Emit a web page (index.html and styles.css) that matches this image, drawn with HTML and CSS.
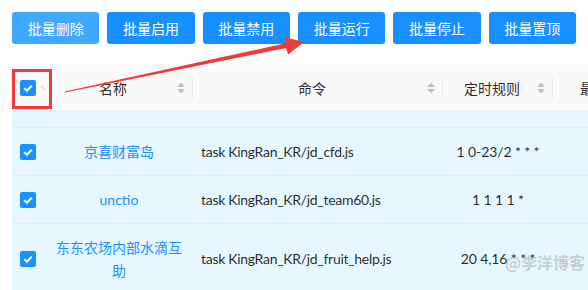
FILE: index.html
```html
<!DOCTYPE html>
<html lang="zh-CN">
<head>
<meta charset="utf-8">
<title>批量操作</title>
<link rel="stylesheet" href="styles.css">
</head>
<body>
<div class="page">
  <div class="toolbar">
    <button class="btn btn-hover">批量删除</button>
    <button class="btn">批量启用</button>
    <button class="btn">批量禁用</button>
    <button class="btn">批量运行</button>
    <button class="btn">批量停止</button>
    <button class="btn">批量置顶</button>
  </div>
  <div class="table-wrap">
    <table class="tbl">
      <colgroup>
        <col class="c-sel"><col class="c-name"><col class="c-cmd"><col class="c-cron"><col class="c-last">
      </colgroup>
      <thead>
        <tr>
          <th class="sel">
            <div class="selhead">
              <span class="cb"><svg viewBox="0 0 16 16" width="16" height="16"><path d="M4.2 8.2 L6.9 10.8 L11.8 5.6" fill="none" stroke="#fff" stroke-width="2"/></svg></span>
              <svg class="dd" viewBox="0 0 7 5" width="7" height="5"><path d="M0.5 0.5 L3.5 4 L6.5 0.5" fill="none" stroke="#bfbfbf" stroke-width="1"/></svg>
            </div>
          </th>
          <th class="div"><div class="sorters"><span class="title">名称</span><svg class="sorter" viewBox="0 0 8 12" width="8" height="12"><path d="M0 5 L4 0.5 L8 5 Z M0 7 L8 7 L4 11.5 Z" fill="#bfbfbf"/></svg></div></th>
          <th class="div"><div class="sorters"><span class="title">命令</span><svg class="sorter" viewBox="0 0 8 12" width="8" height="12"><path d="M0 5 L4 0.5 L8 5 Z M0 7 L8 7 L4 11.5 Z" fill="#bfbfbf"/></svg></div></th>
          <th class="div"><div class="sorters"><span class="title">定时规则</span><svg class="sorter" viewBox="0 0 8 12" width="8" height="12"><path d="M0 5 L4 0.5 L8 5 Z M0 7 L8 7 L4 11.5 Z" fill="#bfbfbf"/></svg></div></th>
          <th class="last"><span class="title">最后运行时间</span></th>
        </tr>
      </thead>
      <tbody>
        <tr class="spacer"><td colspan="5"></td></tr>
        <tr>
          <td class="sel"><span class="cb"><svg viewBox="0 0 16 16" width="16" height="16"><path d="M4.2 8.2 L6.9 10.8 L11.8 5.6" fill="none" stroke="#fff" stroke-width="2"/></svg></span></td>
          <td class="name"><a class="link">京喜财富岛</a></td>
          <td class="cmd">task KingRan_KR/jd_cfd.js</td>
          <td class="cron">1 0-23/2 * * *</td>
          <td></td>
        </tr>
        <tr>
          <td class="sel"><span class="cb"><svg viewBox="0 0 16 16" width="16" height="16"><path d="M4.2 8.2 L6.9 10.8 L11.8 5.6" fill="none" stroke="#fff" stroke-width="2"/></svg></span></td>
          <td class="name"><a class="link">unctio</a></td>
          <td class="cmd">task KingRan_KR/jd_team60.js</td>
          <td class="cron">1 1 1 1 *</td>
          <td></td>
        </tr>
        <tr>
          <td class="sel"><span class="cb"><svg viewBox="0 0 16 16" width="16" height="16"><path d="M4.2 8.2 L6.9 10.8 L11.8 5.6" fill="none" stroke="#fff" stroke-width="2"/></svg></span></td>
          <td class="name"><a class="link">东东农场内部水滴互助</a></td>
          <td class="cmd">task KingRan_KR/jd_fruit_help.js</td>
          <td class="cron">20 4,16 * * *</td>
          <td></td>
        </tr>
      </tbody>
    </table>
  </div>
  <div class="mark-box"></div>
  <svg class="arrow" viewBox="0 0 588 290" width="588" height="290">
    <polygon points="65,92.6 285.9,48.1 288.2,54.5 304,42 284.6,36.9 285.9,43.3 64.8,91.6" fill="#f23a3a"/>
  </svg>
  <div class="watermark">@李洋博客</div>
</div>
</body>
</html>
```
FILE: styles.css
```css
html, body {
  margin: 0;
  padding: 0;
  background: #fff;
}
body {
  font-family: Lato, "Noto Sans CJK SC", sans-serif;
  font-size: 14px;
  color: rgba(0, 0, 0, 0.85);
  overflow: hidden;
  width: 588px;
  height: 290px;
}
.page {
  position: relative;
  width: 588px;
  height: 290px;
  overflow: hidden;
}
.toolbar {
  display: flex;
  gap: 8px;
  padding: 12px 12px 0 12px;
  margin-bottom: 21px;
}
.btn {
  width: 88px;
  height: 32px;
  border: none;
  border-radius: 3px;
  background: #1890ff;
  color: #fff;
  font-family: "Noto Sans CJK SC", sans-serif;
  font-size: 14px;
  line-height: 22px;
  padding: 0;
}
.btn-hover {
  background: #40a9ff;
}
.table-wrap {
  margin-left: 12px;
  width: 576px;
  overflow: hidden;
}
.tbl {
  table-layout: fixed;
  border-collapse: collapse;
  border-spacing: 0;
  width: 741px;
}
.c-sel { width: 33px; }
.c-name { width: 148px; }
.c-cmd { width: 250px; }
.c-cron { width: 110px; }
.c-last { width: 200px; }
.tbl th {
  position: relative;
  background: #fafafa;
  font-weight: 400;
  padding: 12px 8px;
  line-height: 22px;
  border-bottom: 1px solid #f0f0f0;
  font-family: "Noto Sans CJK SC", sans-serif;
  text-align: center;
  white-space: nowrap;
}
.tbl th.div::before {
  content: "";
  position: absolute;
  right: 0;
  top: 50%;
  width: 1px;
  height: 21px;
  transform: translateY(-50%);
  background: rgba(0, 0, 0, 0.06);
}
.tbl th.last {
  text-align: left;
  padding-left: 27px;
}
.selhead {
  display: flex;
  align-items: center;
  gap: 5px;
}
.sorters {
  display: flex;
  align-items: center;
}
.sorters .title {
  flex: 1;
  text-align: center;
}
.sorter {
  margin-left: 4px;
  flex: none;
}
.cb {
  display: block;
  width: 16px;
  height: 16px;
  border-radius: 2px;
  background: #1890ff;
  flex: none;
}
.cb svg { display: block; }
.dd { display: block; flex: none; }
.tbl td {
  background: #e6f7ff;
  padding: 12px 8px;
  line-height: 22px;
  border-bottom: 1px solid #d8eef9;
  vertical-align: middle;
}
.tbl tr.spacer td {
  height: 15px;
  padding: 0;
}
.tbl td.name {
  text-align: center;
  font-family: "Noto Sans CJK SC", sans-serif;
}
.link {
  color: #1890ff;
  font-family: Lato, "Noto Sans CJK SC", sans-serif;
}
.tbl td.cmd {
  text-align: left;
  white-space: nowrap;
  letter-spacing: -0.3px;
}
.tbl td.cron {
  text-align: center;
  white-space: nowrap;
  letter-spacing: -0.1px;
}
.mark-box {
  position: absolute;
  left: 12px;
  top: 69px;
  width: 34px;
  height: 34px;
  border: 3px solid #f23a3a;
}
.arrow {
  position: absolute;
  left: 0;
  top: 0;
  pointer-events: none;
}
.watermark {
  position: absolute;
  left: 505px;
  top: 250px;
  font-family: "Noto Sans CJK SC", sans-serif;
  font-weight: 700;
  font-size: 16px;
  color: rgba(170, 170, 170, 0.55);
  letter-spacing: 0;
  white-space: nowrap;
}
```
